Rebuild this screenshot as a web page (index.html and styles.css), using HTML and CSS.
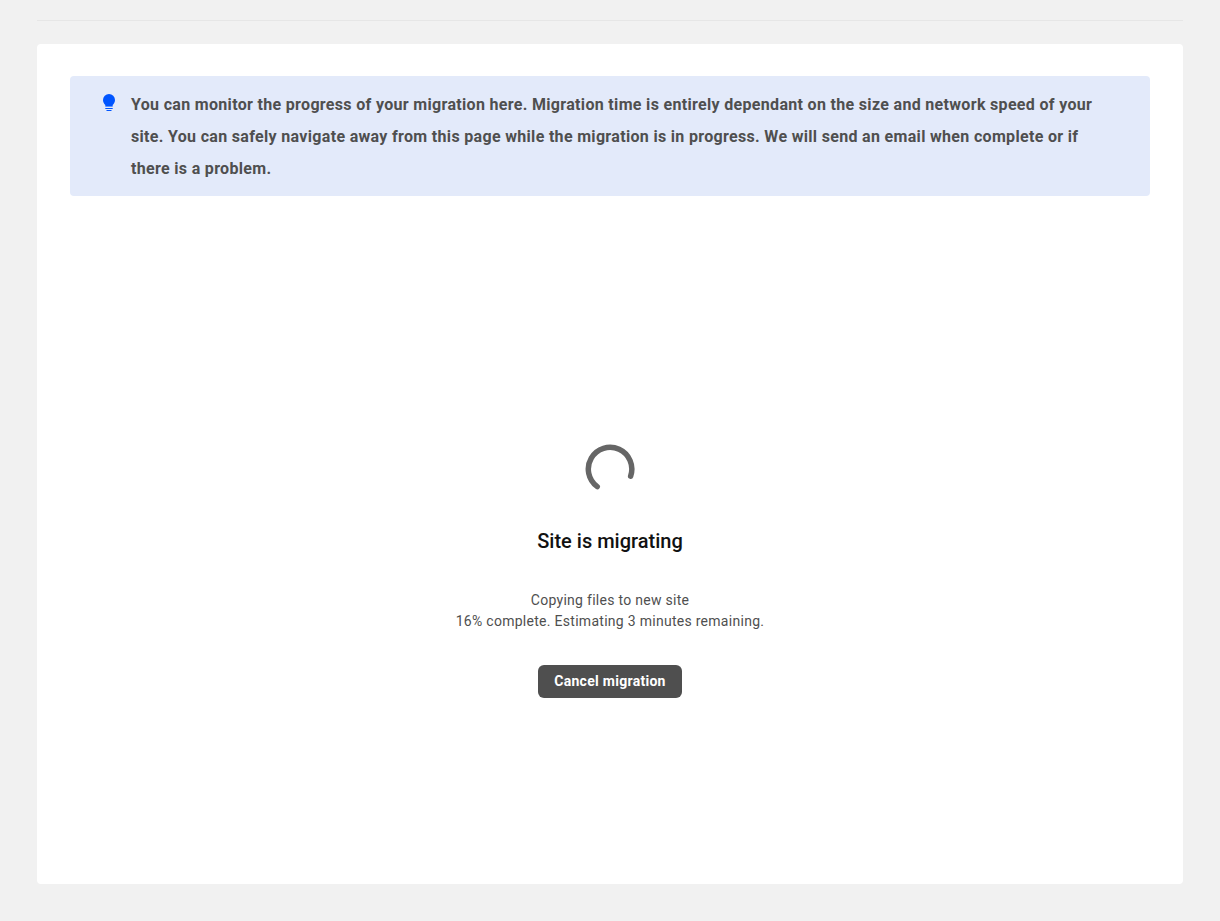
FILE: index.html
```html
<!DOCTYPE html>
<html lang="en">
<head>
    <meta charset="UTF-8">
    <title>Site migration</title>
    <link rel="stylesheet" href="styles.css">
</head>
<body>
    <main class="page">
        <section class="card">
            <div class="notice">
                <svg class="notice-icon" viewBox="0 0 14 18" aria-hidden="true">
                    <path d="M7 0a6 6 0 0 0-6 6c0 2.200 1 3.800 2.300 5v1h7.400v-1C12 9.800 13 8.200 13 6a6 6 0 0 0-6-6z"/>
                    <path d="M3.300 12h7.400v1H3.300z" opacity="0.6"/>
                    <path d="M3.300 14h7.400v1H3.300zM4.500 16h5v1h-5z"/>
                </svg>
                <p>You can monitor the progress of your migration here. Migration time is entirely dependant on the size and network speed of your site. You can safely navigate away from this page while the migration is in progress. We will send an email when complete or if there is a problem.</p>
            </div>

            <div class="status">
                <svg class="spinner" viewBox="0 0 100 100" aria-hidden="true">
                    <path d="M24.500 85.300A43.500 43.500 0 1 1 91.300 64.200"/>
                </svg>
                <h1>Site is migrating</h1>
                <p class="progress">Copying files to new site<br>16% complete. Estimating 3 minutes remaining.</p>
                <button type="button" class="cancel">Cancel migration</button>
            </div>
        </section>
    </main>
</body>
</html>
```

FILE: styles.css
```css
* {
    box-sizing: border-box;
}

body {
    margin: 0;
    background: #f1f1f1;
    color: #4f4f4f;
    font-family: Roboto, sans-serif;
}

.page {
    min-height: 100vh;
    padding: 20px 37px 37px;
    display: flex;
    flex-direction: column;
}

.page::before {
    content: "";
    border-top: 1px solid #e6e6e6;
    margin-bottom: 23px;
}

.card {
    flex: 1;
    display: flex;
    flex-direction: column;
    padding: 32px 33px;
    background: #fff;
    border-radius: 4px;
}

.notice,
.progress,
.cancel {
    letter-spacing: 0.02em;
}

.notice {
    display: flex;
    align-items: flex-start;
    gap: 15px;
    padding: 13px 32px 11px;
    background: #e3eafa;
    border-radius: 4px;
}

.notice-icon {
    flex: none;
    width: 14px;
    height: 18px;
    margin-top: 5px;
    fill: #0055ff;
}

.notice p {
    margin: 0;
    font-size: 16px;
    font-weight: 700;
    line-height: 32px;
}

.status {
    flex: 1;
    display: flex;
    flex-direction: column;
    align-items: center;
    justify-content: center;
    padding-top: 94px;
    text-align: center;
}

.spinner {
    width: 50px;
    height: 50px;
    fill: none;
    stroke: #666;
    stroke-width: 11;
    stroke-linecap: round;
}

.status h1 {
    margin: 32px 0 34px;
    color: #111;
    font-size: 20px;
    font-weight: 500;
    line-height: 30px;
}

.progress {
    margin: 0 0 33px;
    font-size: 14px;
    line-height: 21px;
}

.cancel {
    padding: 8px 16px;
    border: none;
    border-radius: 6px;
    background: #4f4f4f;
    color: #fff;
    font: 700 14px/17px Roboto, sans-serif;
    cursor: pointer;
}
```
